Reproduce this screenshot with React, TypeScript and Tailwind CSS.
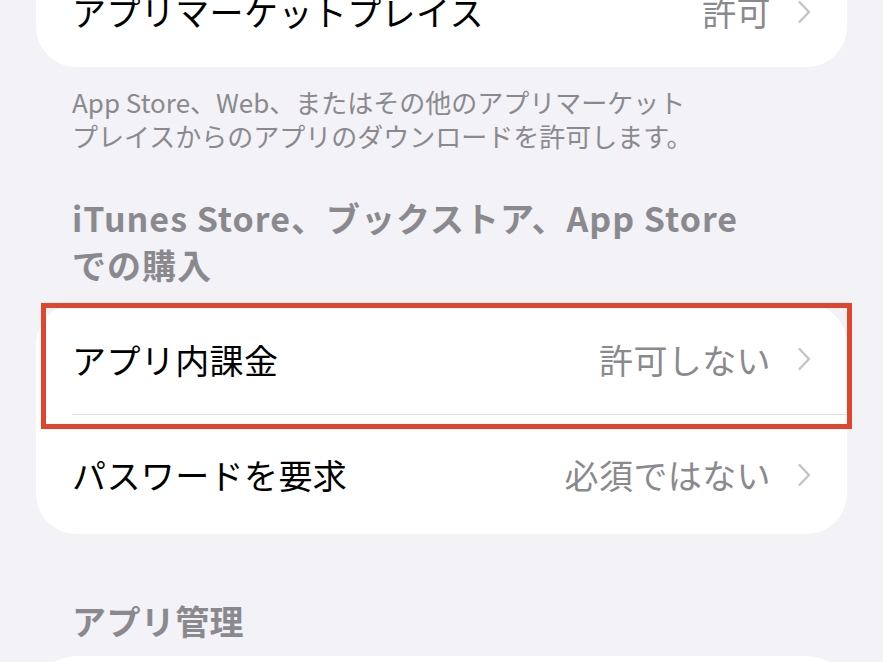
import React from 'react'

const font = { fontFamily: '"Noto Sans CJK JP", "Noto Sans", sans-serif' }

function Chevron() {
  return (
    <svg width="14" height="24" viewBox="0 0 14 24" fill="none" className="shrink-0">
      <path d="M2.5 2 L12 12 L2.5 22" stroke="#c4c4c7" strokeWidth="2.4" strokeLinecap="round" strokeLinejoin="round" />
    </svg>
  )
}

function Row({ label, value, divider, h }: { label: string; value: string; divider?: boolean; h: string }) {
  return (
    <div className="pl-9">
      <div className={`flex items-center justify-between pr-9 ${h} ${divider ? 'border-b-[1.5px] border-[#dedee0]' : ''}`}>
        <span className="text-[34px] text-black tracking-[0.4px]">{label}</span>
        <div className="flex items-center gap-[26px]">
          <span className="text-[34px] text-[#8a8a8e] tracking-[0.4px]">{value}</span>
          <Chevron />
        </div>
      </div>
    </div>
  )
}

export default function App() {
  return (
    <div className="w-[883px] h-[662px] overflow-hidden bg-[#f2f2f7] px-9" style={font}>
      {/* card cut off at top */}
      <div className="mt-[-44px] bg-white rounded-[40px]">
        <Row label="アプリマーケットプレイス" value="許可" h="h-[111px]" />
      </div>

      <p className="mt-[18px] px-9 text-[26px] leading-[34px] text-[#8a8a8e]">
        App Store、Web、またはその他のアプリマーケット<br />
        プレイスからのアプリのダウンロードを許可します。
      </p>

      <h2 className="mt-[41px] px-9 text-[34px] leading-[47px] font-semibold text-[#8a8a8e] tracking-[1px]">
        iTunes Store、ブックストア、App Store<br />
        での購入
      </h2>

      <div className="relative mt-4 bg-white rounded-[40px]">
        <Row label="アプリ内課金" value="許可しない" divider h="h-[111px]" />
        <Row label="パスワードを要求" value="必須ではない" h="h-[119px]" />
        <div className="absolute left-[5px] top-[-1px] w-[811px] h-[126px] border-[5px] border-[#e0452e] pointer-events-none" />
      </div>

      <h2 className="mt-[63px] px-9 text-[34px] leading-[47px] font-semibold text-[#8a8a8e] tracking-[0.4px]">
        アプリ管理
      </h2>

      <div className="mt-3 bg-white rounded-[40px] h-[120px]" />
    </div>
  )
}
